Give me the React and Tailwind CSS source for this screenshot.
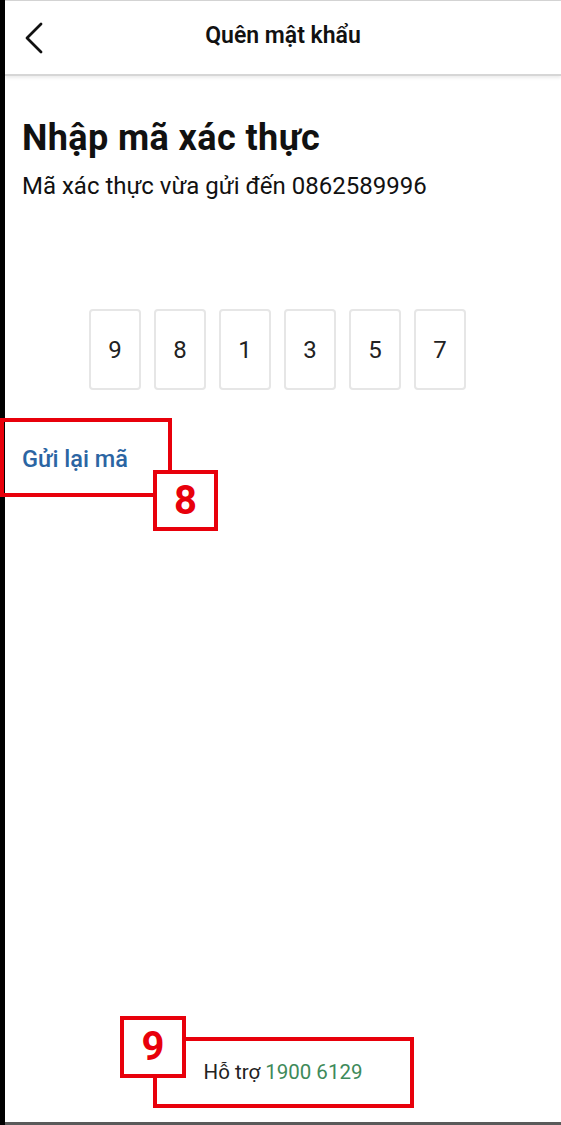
const digits = ['9', '8', '1', '3', '5', '7']

function Marker({ n, className }) {
    return (
        <div className={`absolute flex items-center justify-center bg-white border-[4px] border-[#e8000b] ${className}`}>
            <span className="text-[40px] font-bold leading-none text-[#e8000b]">{n}</span>
        </div>
    )
}

export default function App(){
    return(
        <div className="w-[561px] h-[1125px] flex bg-black font-['Roboto',sans-serif] overflow-hidden">
            <div className="w-[5px] shrink-0" />
            <div className="relative flex-1 flex flex-col bg-white border-t border-[#d4d4d4] border-b-[3px] border-b-[#5a5a5a]">
                {/* header */}
                <header className="relative h-[75px] shrink-0 flex items-center justify-center border-b-2 border-[#d6d6d6] shadow-[0_2px_3px_rgba(0,0,0,0.08)]">
                    <button className="absolute left-[19px] top-[21px]">
                        <svg width="20" height="32" viewBox="0 0 20 32" fill="none" stroke="#111" strokeWidth="2.8" strokeLinecap="round" strokeLinejoin="round">
                            <polyline points="17,2 3,16 17,30" />
                        </svg>
                    </button>
                    <h2 className="text-[23px] font-semibold text-[#111] -mt-[2px]">Quên mật khẩu</h2>
                </header>

                <main className="flex-1 flex flex-col px-[17px]">
                    <h1 className="mt-[42px] text-[36px] leading-[40px] font-bold tracking-[0.4px] text-[#111]">Nhập mã xác thực</h1>
                    <p className="mt-[14px] text-[24px] leading-[28px] text-[#111]">Mã xác thực vừa gửi đến 0862589996</p>

                    <div className="mt-[109px] flex justify-center gap-[13px] pr-[11px]">
                        {digits.map((d, i) => (
                            <div key={i} className="w-[52px] h-[81px] rounded-[4px] border-2 border-[#e6e6e6] flex items-center justify-center text-[24px] text-[#222]">
                                {d}
                            </div>
                        ))}
                    </div>

                    <a className="mt-[55px] text-[23.5px] font-medium text-[#2b65a3] leading-[28px]">Gửi lại mã</a>

                    <div className="mt-auto mb-[38px] flex justify-center text-[20.5px] text-[#222] leading-[24px]">
                        <span>Hỗ trợ <span className="text-[#3e8a5a]">1900 6129</span></span>
                    </div>
                </main>

                {/* annotation overlays */}
                <div className="absolute left-[-5px] top-[417px] w-[172px] h-[79px] border-[4px] border-[#e8000b]" />
                <Marker n="8" className="left-[148px] top-[469px] w-[65px] h-[61px]" />
                <div className="absolute left-[148px] top-[1036px] w-[261px] h-[71px] border-[4px] border-[#e8000b]" />
                <Marker n="9" className="left-[115px] top-[1015px] w-[66px] h-[62px]" />
            </div>
        </div>
    )
}
